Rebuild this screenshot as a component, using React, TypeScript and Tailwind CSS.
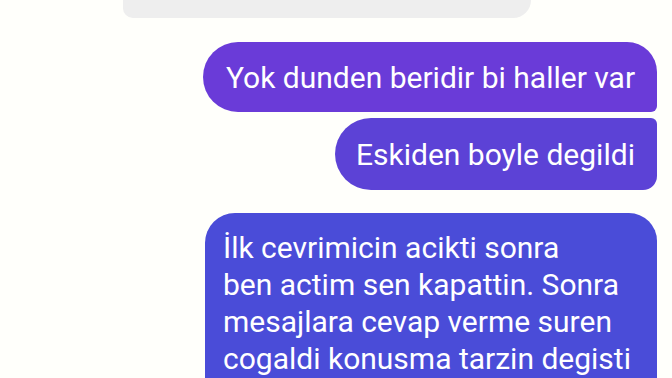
const App = () => {
  return (
    <div className="w-[672px] h-[378px] overflow-hidden bg-[#fffffb] font-['Roboto',sans-serif] text-white">
      <div className="flex flex-col">
        <div className="ml-[123px] w-[408px] h-[18px] rounded-bl-[12px] rounded-br-[22px] bg-[#eeeeee]" />
        <div className="mt-[24px] flex flex-col items-end pr-[15px] gap-[6px]">
          <div className="w-[454px] h-[70px] flex items-center pl-[23px] pt-[2px] rounded-l-[35px] rounded-tr-[30px] rounded-br-[6px] bg-[#6a3bd8] text-[30px] leading-[36px] whitespace-nowrap">
            Yok dunden beridir bi haller var
          </div>
          <div className="w-[322px] h-[72px] flex items-center pl-[21px] pt-[2px] rounded-l-[36px] rounded-tr-[6px] rounded-br-[14px] bg-[#5c42d6] text-[30px] leading-[36px] whitespace-nowrap">
            Eskiden boyle degildi
          </div>
        </div>
        <div className="mt-[23px] flex justify-end pr-[15px]">
          <div className="w-[452px] h-[200px] pt-[16px] pl-[18px] rounded-tl-[30px] rounded-tr-[28px] bg-[#4a4cd8] text-[30px] leading-[37px] whitespace-nowrap">
            <div>İlk cevrimicin acikti sonra</div>
            <div>ben actim sen kapattin. Sonra</div>
            <div>mesajlara cevap verme suren</div>
            <div>cogaldi konusma tarzin degisti</div>
          </div>
        </div>
      </div>
    </div>
  );
};

export default App;
